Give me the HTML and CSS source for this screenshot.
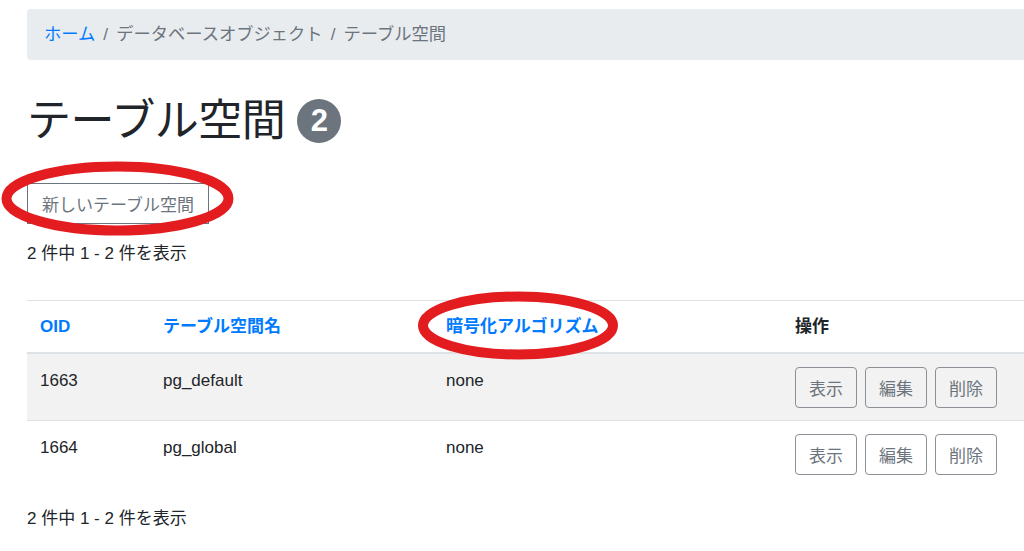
FILE: index.html
```html
<!DOCTYPE html>
<html lang="ja">
<head>
<meta charset="utf-8">
<title>テーブル空間</title>
<link rel="stylesheet" href="styles.css">
</head>
<body>
<div class="page">
  <nav class="breadcrumb">
    <a href="#" class="crumb-link">ホーム</a>
    <span class="sep">/</span>
    <span class="crumb">データベースオブジェクト</span>
    <span class="sep">/</span>
    <span class="crumb">テーブル空間</span>
  </nav>

  <h1 class="title"><span class="title-text">テーブル空間</span><span class="badge">2</span></h1>

  <div class="actions">
    <button class="btn btn-new">新しいテーブル空間</button>
  </div>

  <p class="count">2 件中 1 - 2 件を表示</p>

  <table class="table">
    <colgroup>
      <col class="c1"><col class="c2"><col class="c3"><col class="c4">
    </colgroup>
    <thead>
      <tr>
        <th><a href="#">OID</a></th>
        <th><a href="#">テーブル空間名</a></th>
        <th><a href="#">暗号化アルゴリズム</a></th>
        <th>操作</th>
      </tr>
    </thead>
    <tbody>
      <tr class="odd">
        <td>1663</td>
        <td>pg_default</td>
        <td>none</td>
        <td><div class="btns"><button class="btn btn-sm">表示</button><button class="btn btn-sm">編集</button><button class="btn btn-sm">削除</button></div></td>
      </tr>
      <tr>
        <td>1664</td>
        <td>pg_global</td>
        <td>none</td>
        <td><div class="btns"><button class="btn btn-sm">表示</button><button class="btn btn-sm">編集</button><button class="btn btn-sm">削除</button></div></td>
      </tr>
    </tbody>
  </table>

  <p class="count count-bottom">2 件中 1 - 2 件を表示</p>
</div>

<svg class="annot" width="1024" height="551" viewBox="0 0 1024 551" aria-hidden="true">
  <ellipse cx="117.5" cy="198.5" rx="111" ry="32" fill="none" stroke="#e31c1f" stroke-width="10"/>
  <ellipse cx="518" cy="325.5" rx="95" ry="29" fill="none" stroke="#e31c1f" stroke-width="10"/>
</svg>
</body>
</html>
```

FILE: styles.css
```css
html, body {
  margin: 0;
  padding: 0;
  overflow: hidden;
  background: #fff;
}
body {
  font-family: "Liberation Sans", Arial, "Noto Sans CJK JP", sans-serif;
  font-size: 17px;
  line-height: 1.5;
  color: #212529;
  position: relative;
  width: 1024px;
  height: 551px;
}
.page {
  width: 1080px;
  padding: 9px 0 0 27px;
}
.breadcrumb {
  display: flex;
  align-items: center;
  gap: 8px;
  height: 51px;
  box-sizing: border-box;
  padding: 0 17px;
  background: #e9ecef;
  border-radius: 4px;
  color: #6c757d;
  font-size: 17.3px;
}
.crumb-link {
  color: #007bff;
  text-decoration: none;
}
.title {
  margin: 31px 0 0;
  font-size: 44px;
  font-weight: 400;
  line-height: 52px;
  display: flex;
  align-items: center;
  gap: 12px;
  color: #212529;
  font-family: "Noto Sans CJK JP", sans-serif;
}
.title-text {
  letter-spacing: -0.5px;
}
.badge {
  display: inline-flex;
  align-items: center;
  justify-content: center;
  width: 44px;
  height: 44px;
  margin-top: 8px;
  border-radius: 50%;
  background: #6c757d;
  color: #fff;
  font-family: "Liberation Sans", Arial, sans-serif;
  font-size: 31px;
  font-weight: 700;
}
.actions {
  margin-top: 40px;
}
.btn {
  font-family: "Liberation Sans", Arial, "Noto Sans CJK JP", sans-serif;
  font-size: 17px;
  color: #6c757d;
  background: transparent;
  border: 1px solid #6c757d;
  cursor: pointer;
}
.btn-new {
  height: 41px;
  padding: 0 14px;
  border-radius: 0;
}
.count {
  margin: 17px 0 0;
  line-height: 26px;
}
.table {
  margin-top: 33px;
  width: 1060px;
  border-collapse: collapse;
}
.c1 { width: 123px; }
.c2 { width: 283px; }
.c3 { width: 349px; }
.table th, .table td {
  text-align: left;
  vertical-align: top;
  padding: 13px 13px 12px;
  border-top: 1px solid #dee2e6;
  line-height: 26px;
}
.table td {
  padding-top: 14px;
  padding-bottom: 12px;
}
.table th {
  font-weight: 700;
  border-bottom: 2px solid #dee2e6;
  color: #212529;
}
.table th a {
  color: #007bff;
  text-decoration: none;
}
.table tr.odd td {
  background: #f2f2f2;
}
.btns {
  display: flex;
  gap: 8px;
  margin-top: -1px;
}
.btn-sm {
  width: 62px;
  height: 41px;
  padding: 0;
  border-radius: 4px;
  border-color: #8a9096;
}
.count-bottom {
  margin-top: 19px;
}
.annot {
  position: absolute;
  left: 0;
  top: 0;
  pointer-events: none;
}
```
